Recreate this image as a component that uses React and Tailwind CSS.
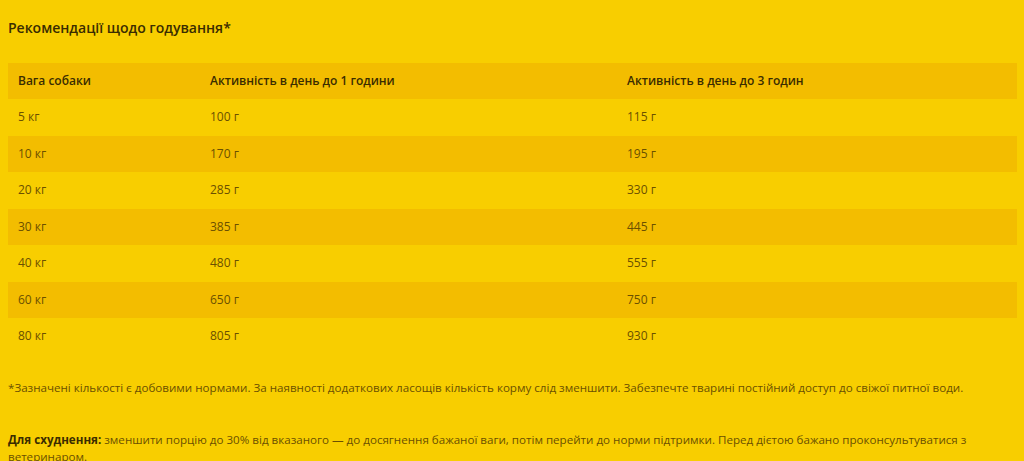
const rows = [
  ['5 кг', '100 г', '115 г'],
  ['10 кг', '170 г', '195 г'],
  ['20 кг', '285 г', '330 г'],
  ['30 кг', '385 г', '445 г'],
  ['40 кг', '480 г', '555 г'],
  ['60 кг', '650 г', '750 г'],
  ['80 кг', '805 г', '930 г'],
]

export default function App() {
  return (
    <div className="min-h-screen bg-[#f8ce00] px-2 pt-[18px] text-[#6b5000]" style={{ fontFamily: '"Open Sans", "Noto Sans", sans-serif' }}>
      <h2 className="text-[14px] font-semibold text-[#3a2c00] leading-5">Рекомендації щодо годування*</h2>

      <table className="mt-[25px] w-[1009px] border-collapse text-[12px]">
        <thead>
          <tr className="bg-[#f3bd00] text-[#3a2c00] font-semibold text-[12px]">
            <th className="w-[192px] h-[36px] px-[10px] text-left font-semibold">Вага собаки</th>
            <th className="w-[417px] h-[36px] px-[10px] text-left font-semibold">Активність в день до 1 години</th>
            <th className="h-[36px] px-[10px] text-left font-semibold">Активність в день до 3 годин</th>
          </tr>
        </thead>
        <tbody>
          {rows.map((r, i) => (
            <tr key={r[0]} className={i % 2 === 1 ? 'bg-[#f3bd00]' : ''}>
              {r.map((c, j) => (
                <td key={j} className="h-[36.5px] px-[10px]">{c}</td>
              ))}
            </tr>
          ))}
        </tbody>
      </table>

      <p className="mt-[24px] text-[11.6px] leading-[18px]">
        *Зазначені кількості є добовими нормами. За наявності додаткових ласощів кількість корму слід зменшити. Забезпечте тварині постійний доступ до свіжої питної води.
      </p>

      <p className="mt-[34px] text-[11.6px] leading-[17px]">
        <strong className="font-bold text-[#3a2c00]">Для схуднення:</strong> зменшити порцію до 30% від вказаного — до досягнення бажаної ваги, потім перейти до норми підтримки. Перед дієтою бажано проконсультуватися з ветеринаром.
      </p>
    </div>
  )
}
